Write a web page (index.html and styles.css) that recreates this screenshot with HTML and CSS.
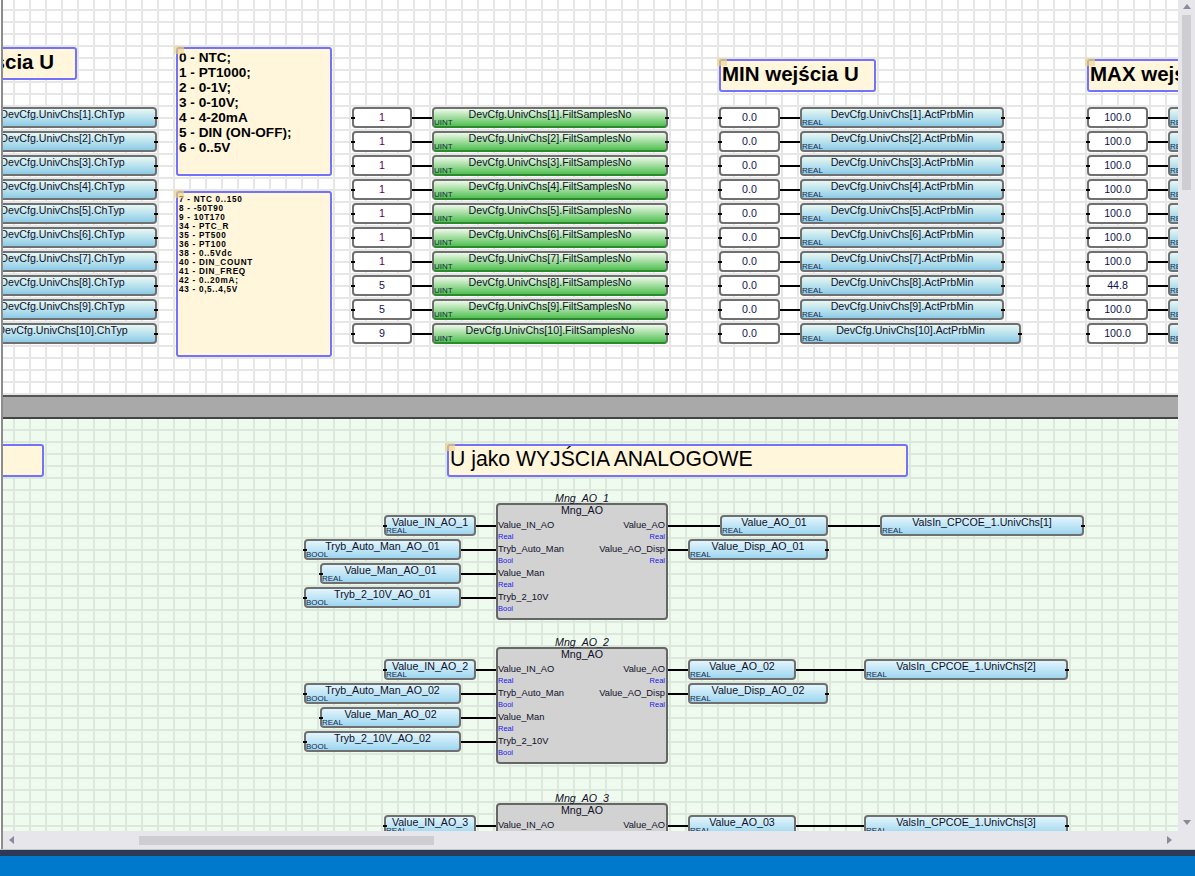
FILE: index.html
```html
<!DOCTYPE html>
<html lang="en">
<head>
    <meta charset="UTF-8">
    <meta name="viewport" content="width=device-width, initial-scale=1.0">
    <title>Mng_AO</title>
    <link rel="stylesheet" href="styles.css">
</head>
<body>
    <div class="frame">
        <div class="strip"></div>
        <div class="view">
            <div class="view-top">
                <div class="canvas">
                    <!-- sheet: universal channels config -->
                    <div class="sheet sheet-white">
                        <div class="note note-title note-type"><span>TYP wejścia U</span></div>
                        <div class="note note-legend">0 - NTC;
1 - PT1000;
2 - 0-1V;
3 - 0-10V;
4 - 4-20mA
5 - DIN (ON-OFF);
6 - 0..5V</div>
                        <div class="note note-legend-small">7 - NTC 0..150
8 - -50T90
9 - 10T170
34 - PTC_R
35 - PT500
36 - PT100
38 - 0..5Vdc
40 - DIN_COUNT
41 - DIN_FREQ
42 - 0..20mA;
43 - 0,5..4,5V</div>
                        <div class="note note-title note-min"><span>MIN wejścia U</span></div>
                        <div class="note note-title note-max"><span>MAX wejścia U</span></div>

                        <div class="group col-type">
                            <div class="row"><div class="var pin-r w-type">DevCfg.UnivChs[1].ChTyp</div></div>
                            <div class="row"><div class="var pin-r w-type">DevCfg.UnivChs[2].ChTyp</div></div>
                            <div class="row"><div class="var pin-r w-type">DevCfg.UnivChs[3].ChTyp</div></div>
                            <div class="row"><div class="var pin-r w-type">DevCfg.UnivChs[4].ChTyp</div></div>
                            <div class="row"><div class="var pin-r w-type">DevCfg.UnivChs[5].ChTyp</div></div>
                            <div class="row"><div class="var pin-r w-type">DevCfg.UnivChs[6].ChTyp</div></div>
                            <div class="row"><div class="var pin-r w-type">DevCfg.UnivChs[7].ChTyp</div></div>
                            <div class="row"><div class="var pin-r w-type">DevCfg.UnivChs[8].ChTyp</div></div>
                            <div class="row"><div class="var pin-r w-type">DevCfg.UnivChs[9].ChTyp</div></div>
                            <div class="row"><div class="var pin-r w-type">DevCfg.UnivChs[10].ChTyp</div></div>
                        </div>

                        <div class="group col-samples">
                            <div class="row"><div class="val pin-l changed">1</div><div class="wire w20"></div><div class="var green pin-r w-samples">DevCfg.UnivChs[1].FiltSamplesNo<span class="type">UINT</span></div></div>
                            <div class="row"><div class="val pin-l changed">1</div><div class="wire w20"></div><div class="var green pin-r w-samples">DevCfg.UnivChs[2].FiltSamplesNo<span class="type">UINT</span></div></div>
                            <div class="row"><div class="val pin-l changed">1</div><div class="wire w20"></div><div class="var green pin-r w-samples">DevCfg.UnivChs[3].FiltSamplesNo<span class="type">UINT</span></div></div>
                            <div class="row"><div class="val pin-l changed">1</div><div class="wire w20"></div><div class="var green pin-r w-samples">DevCfg.UnivChs[4].FiltSamplesNo<span class="type">UINT</span></div></div>
                            <div class="row"><div class="val pin-l changed">1</div><div class="wire w20"></div><div class="var green pin-r w-samples">DevCfg.UnivChs[5].FiltSamplesNo<span class="type">UINT</span></div></div>
                            <div class="row"><div class="val pin-l changed">1</div><div class="wire w20"></div><div class="var green pin-r w-samples">DevCfg.UnivChs[6].FiltSamplesNo<span class="type">UINT</span></div></div>
                            <div class="row"><div class="val pin-l changed">1</div><div class="wire w20"></div><div class="var green pin-r w-samples">DevCfg.UnivChs[7].FiltSamplesNo<span class="type">UINT</span></div></div>
                            <div class="row"><div class="val pin-l">5</div><div class="wire w20"></div><div class="var green pin-r w-samples">DevCfg.UnivChs[8].FiltSamplesNo<span class="type">UINT</span></div></div>
                            <div class="row"><div class="val pin-l">5</div><div class="wire w20"></div><div class="var green pin-r w-samples">DevCfg.UnivChs[9].FiltSamplesNo<span class="type">UINT</span></div></div>
                            <div class="row"><div class="val pin-l">9</div><div class="wire w20"></div><div class="var green pin-r w-samples">DevCfg.UnivChs[10].FiltSamplesNo<span class="type">UINT</span></div></div>
                        </div>

                        <div class="group col-min">
                            <div class="row"><div class="val pin-l">0.0</div><div class="wire w20"></div><div class="var pin-r w-lim">DevCfg.UnivChs[1].ActPrbMin<span class="type">REAL</span></div></div>
                            <div class="row"><div class="val pin-l">0.0</div><div class="wire w20"></div><div class="var pin-r w-lim">DevCfg.UnivChs[2].ActPrbMin<span class="type">REAL</span></div></div>
                            <div class="row"><div class="val pin-l">0.0</div><div class="wire w20"></div><div class="var pin-r w-lim">DevCfg.UnivChs[3].ActPrbMin<span class="type">REAL</span></div></div>
                            <div class="row"><div class="val pin-l">0.0</div><div class="wire w20"></div><div class="var pin-r w-lim">DevCfg.UnivChs[4].ActPrbMin<span class="type">REAL</span></div></div>
                            <div class="row"><div class="val pin-l">0.0</div><div class="wire w20"></div><div class="var pin-r w-lim">DevCfg.UnivChs[5].ActPrbMin<span class="type">REAL</span></div></div>
                            <div class="row"><div class="val pin-l">0.0</div><div class="wire w20"></div><div class="var pin-r w-lim">DevCfg.UnivChs[6].ActPrbMin<span class="type">REAL</span></div></div>
                            <div class="row"><div class="val pin-l">0.0</div><div class="wire w20"></div><div class="var pin-r w-lim">DevCfg.UnivChs[7].ActPrbMin<span class="type">REAL</span></div></div>
                            <div class="row"><div class="val pin-l">0.0</div><div class="wire w20"></div><div class="var pin-r w-lim">DevCfg.UnivChs[8].ActPrbMin<span class="type">REAL</span></div></div>
                            <div class="row"><div class="val pin-l">0.0</div><div class="wire w20"></div><div class="var pin-r w-lim">DevCfg.UnivChs[9].ActPrbMin<span class="type">REAL</span></div></div>
                            <div class="row"><div class="val pin-l">0.0</div><div class="wire w20"></div><div class="var pin-r w-lim-wide">DevCfg.UnivChs[10].ActPrbMin<span class="type">REAL</span></div></div>
                        </div>

                        <div class="group col-max">
                            <div class="row"><div class="val pin-l">100.0</div><div class="wire w20"></div><div class="var pin-r w-lim">DevCfg.UnivChs[1].ActPrbMax<span class="type">REAL</span></div></div>
                            <div class="row"><div class="val pin-l">100.0</div><div class="wire w20"></div><div class="var pin-r w-lim">DevCfg.UnivChs[2].ActPrbMax<span class="type">REAL</span></div></div>
                            <div class="row"><div class="val pin-l">100.0</div><div class="wire w20"></div><div class="var pin-r w-lim">DevCfg.UnivChs[3].ActPrbMax<span class="type">REAL</span></div></div>
                            <div class="row"><div class="val pin-l">100.0</div><div class="wire w20"></div><div class="var pin-r w-lim">DevCfg.UnivChs[4].ActPrbMax<span class="type">REAL</span></div></div>
                            <div class="row"><div class="val pin-l">100.0</div><div class="wire w20"></div><div class="var pin-r w-lim">DevCfg.UnivChs[5].ActPrbMax<span class="type">REAL</span></div></div>
                            <div class="row"><div class="val pin-l">100.0</div><div class="wire w20"></div><div class="var pin-r w-lim">DevCfg.UnivChs[6].ActPrbMax<span class="type">REAL</span></div></div>
                            <div class="row"><div class="val pin-l">100.0</div><div class="wire w20"></div><div class="var pin-r w-lim">DevCfg.UnivChs[7].ActPrbMax<span class="type">REAL</span></div></div>
                            <div class="row"><div class="val pin-l">44.8</div><div class="wire w20"></div><div class="var pin-r w-lim">DevCfg.UnivChs[8].ActPrbMax<span class="type">REAL</span></div></div>
                            <div class="row"><div class="val pin-l">100.0</div><div class="wire w20"></div><div class="var pin-r w-lim">DevCfg.UnivChs[9].ActPrbMax<span class="type">REAL</span></div></div>
                            <div class="row"><div class="val pin-l">100.0</div><div class="wire w20"></div><div class="var pin-r w-lim">DevCfg.UnivChs[10].ActPrbMax<span class="type">REAL</span></div></div>
                        </div>
                    </div>

                    <div class="band"></div>

                    <!-- sheet: analog outputs -->
                    <div class="sheet sheet-green">
                        <div class="note note-title note-left"></div>
                        <div class="note note-title note-ao"><span>U jako WYJŚCIA ANALOGOWE</span></div>

                        <div class="unit unit-1">
                            <div class="inputs">
                                <div class="row"><div class="var light pin-l w-in">Value_IN_AO_1<span class="type">REAL</span></div><div class="wire in-near"></div></div>
                                <div class="row"><div class="var light pin-l w-mode">Tryb_Auto_Man_AO_01<span class="type">BOOL</span></div><div class="wire in-far"></div></div>
                                <div class="row"><div class="var light pin-l w-man">Value_Man_AO_01<span class="type">REAL</span></div><div class="wire in-far"></div></div>
                                <div class="row"><div class="var light pin-l w-mode">Tryb_2_10V_AO_01<span class="type">BOOL</span></div><div class="wire in-far"></div></div>
                            </div>
                            <div class="fb">
                                <div class="fb-name">Mng_AO_1</div>
                                <div class="fb-title">Mng_AO</div>
                                <div class="fb-pins">
                                    <div class="fb-col">
                                        <div class="pin">Value_IN_AO<small>Real</small></div>
                                        <div class="pin">Tryb_Auto_Man<small>Bool</small></div>
                                        <div class="pin">Value_Man<small>Real</small></div>
                                        <div class="pin">Tryb_2_10V<small>Bool</small></div>
                                    </div>
                                    <div class="fb-col fb-col-out">
                                        <div class="pin">Value_AO<small>Real</small></div>
                                        <div class="pin">Value_AO_Disp<small>Real</small></div>
                                    </div>
                                </div>
                            </div>
                            <div class="outputs">
                                <div class="row"><div class="wire w52"></div><div class="var light w-out">Value_AO_01<span class="type">REAL</span></div><div class="wire w52"></div><div class="var light pin-r w-chs">ValsIn_CPCOE_1.UnivChs[1]<span class="type">REAL</span></div></div>
                                <div class="row"><div class="wire w20"></div><div class="var light pin-r w-disp">Value_Disp_AO_01<span class="type">REAL</span></div></div>
                            </div>
                        </div>

                        <div class="unit unit-2">
                            <div class="inputs">
                                <div class="row"><div class="var light pin-l w-in">Value_IN_AO_2<span class="type">REAL</span></div><div class="wire in-near"></div></div>
                                <div class="row"><div class="var light pin-l w-mode">Tryb_Auto_Man_AO_02<span class="type">BOOL</span></div><div class="wire in-far"></div></div>
                                <div class="row"><div class="var light pin-l w-man">Value_Man_AO_02<span class="type">REAL</span></div><div class="wire in-far"></div></div>
                                <div class="row"><div class="var light pin-l w-mode">Tryb_2_10V_AO_02<span class="type">BOOL</span></div><div class="wire in-far"></div></div>
                            </div>
                            <div class="fb">
                                <div class="fb-name">Mng_AO_2</div>
                                <div class="fb-title">Mng_AO</div>
                                <div class="fb-pins">
                                    <div class="fb-col">
                                        <div class="pin">Value_IN_AO<small>Real</small></div>
                                        <div class="pin">Tryb_Auto_Man<small>Bool</small></div>
                                        <div class="pin">Value_Man<small>Real</small></div>
                                        <div class="pin">Tryb_2_10V<small>Bool</small></div>
                                    </div>
                                    <div class="fb-col fb-col-out">
                                        <div class="pin">Value_AO<small>Real</small></div>
                                        <div class="pin">Value_AO_Disp<small>Real</small></div>
                                    </div>
                                </div>
                            </div>
                            <div class="outputs">
                                <div class="row"><div class="wire w20"></div><div class="var light w-out">Value_AO_02<span class="type">REAL</span></div><div class="wire w68"></div><div class="var light pin-r w-chs">ValsIn_CPCOE_1.UnivChs[2]<span class="type">REAL</span></div></div>
                                <div class="row"><div class="wire w20"></div><div class="var light pin-r w-disp">Value_Disp_AO_02<span class="type">REAL</span></div></div>
                            </div>
                        </div>

                        <div class="unit unit-3">
                            <div class="inputs">
                                <div class="row"><div class="var light pin-l w-in">Value_IN_AO_3<span class="type">REAL</span></div><div class="wire in-near"></div></div>
                            </div>
                            <div class="fb">
                                <div class="fb-name">Mng_AO_3</div>
                                <div class="fb-title">Mng_AO</div>
                                <div class="fb-pins">
                                    <div class="fb-col">
                                        <div class="pin">Value_IN_AO<small>Real</small></div>
                                    </div>
                                    <div class="fb-col fb-col-out">
                                        <div class="pin">Value_AO<small>Real</small></div>
                                    </div>
                                </div>
                            </div>
                            <div class="outputs">
                                <div class="row"><div class="wire w20"></div><div class="var light w-out">Value_AO_03<span class="type">REAL</span></div><div class="wire w68"></div><div class="var light pin-r w-chs">ValsIn_CPCOE_1.UnivChs[3]<span class="type">REAL</span></div></div>
                            </div>
                        </div>
                    </div>
                </div>
                <div class="vscroll">
                    <div class="arrow arrow-up"></div>
                    <div class="vthumb"></div>
                    <div class="arrow arrow-down"></div>
                </div>
            </div>
            <div class="hscroll">
                <div class="arrow arrow-left"></div>
                <div class="hthumb"></div>
                <div class="arrow arrow-right"></div>
            </div>
        </div>
    </div>
    <div class="navy-bar"></div>
    <div class="blue-bar"></div>
</body>
</html>
```

FILE: styles.css
```css
body {
    margin: 0;
    height: 876px;
    overflow: hidden;
    background: #fff;
    font-family: "Liberation Sans", Arial, sans-serif;
    color: #101028;
}

/* window */
.frame {
    display: flex;
    height: 849px;
    border-bottom: 1px solid #c4c4c4;
}
.strip {
    width: 1px;
    border-right: 2px solid #8c8c8c;
    background: #fff;
}
.view {
    flex: 1;
    min-width: 0;
    display: flex;
    flex-direction: column;
}
.view-top {
    display: flex;
    height: 831px;
}
.canvas {
    flex: 1;
    min-width: 0;
    overflow: hidden;
}
.navy-bar {
    height: 6px;
    background: #2c3a57;
}
.blue-bar {
    height: 20px;
    background: #0078cc;
}

/* scrollbars */
.vscroll {
    width: 17px;
    background: #e7e6eb;
    display: flex;
    flex-direction: column;
    align-items: center;
    padding: 4px 0 6px;
    box-sizing: border-box;
}
.vthumb {
    width: 9px;
    height: 175px;
    margin-top: 6px;
    background: #cdcdd2;
}
.hscroll {
    height: 18px;
    background: #e7e6eb;
    display: flex;
    align-items: center;
    padding: 0 23px 0 6px;
}
.hthumb {
    width: 295px;
    height: 9px;
    margin-left: 125px;
    background: #cdcdd2;
}
.arrow {
    width: 0;
    height: 0;
}
.arrow-up {
    border-left: 4.5px solid transparent;
    border-right: 4.5px solid transparent;
    border-bottom: 5px solid #8a8a9a;
}
.arrow-down {
    margin-top: auto;
    border-left: 4.5px solid transparent;
    border-right: 4.5px solid transparent;
    border-top: 5px solid #8a8a9a;
}
.arrow-left {
    border-top: 4.5px solid transparent;
    border-bottom: 4.5px solid transparent;
    border-right: 5px solid #8a8a9a;
}
.arrow-right {
    margin-left: auto;
    border-top: 4.5px solid transparent;
    border-bottom: 4.5px solid transparent;
    border-left: 5px solid #8a8a9a;
}

/* sheets with the 16x12 grid */
.sheet {
    position: relative;
    overflow: hidden;
    background-size: 16px 12px;
    background-position: 10px 9px;
}
.sheet-white {
    height: 395px;
    background-color: #fff;
    background-image:
        linear-gradient(to right, #e6e6e6 2px, transparent 2px),
        linear-gradient(to bottom, #e6e6e6 2px, transparent 2px);
}
.sheet-green {
    height: 412px;
    background-color: #f0fbf0;
    background-position: 10px 10px;
    background-image:
        linear-gradient(to right, #dde8dd 2px, transparent 2px),
        linear-gradient(to bottom, #dde8dd 2px, transparent 2px);
}
.band {
    height: 20px;
    background: #a9a9a9;
    border-top: 2px solid #555;
    border-bottom: 2px solid #444;
}

/* comment boxes */
.note {
    position: absolute;
    box-sizing: border-box;
    border: 2px solid #7272fa;
    border-radius: 3px;
    background: #fff6dc;
    color: #000;
}
.note::before {
    content: "";
    position: absolute;
    top: -3px;
    left: -4px;
    width: 10px;
    height: 8px;
    background: rgba(240, 210, 130, 0.65);
}
.note-title {
    display: flex;
    align-items: center;
    height: 33px;
    padding: 0 0 3px 1px;
    font-size: 20.5px;
    font-weight: bold;
    white-space: nowrap;
}
.note-type {
    left: -102px;
    top: 47px;
    width: 176px;
    justify-content: flex-end;
    padding-right: 21px;
}
.note-min {
    left: 716px;
    top: 59px;
    width: 157px;
}
.note-max {
    left: 1084px;
    top: 59px;
    width: 157px;
}
.note-left {
    left: -100px;
    top: 25px;
    width: 141px;
}
.note-ao {
    left: 444px;
    top: 25px;
    width: 461px;
    font-size: 21.2px;
    font-weight: normal;
}
.note-legend {
    left: 173px;
    top: 47px;
    width: 156px;
    height: 129px;
    padding: 1px 0 0 1px;
    font-size: 13.6px;
    font-weight: bold;
    line-height: 15px;
    white-space: pre;
}
.note-legend-small {
    left: 173px;
    top: 191px;
    width: 156px;
    height: 166px;
    padding: 2px 0 0 1px;
    font-size: 8.2px;
    font-weight: bold;
    letter-spacing: 0.7px;
    line-height: 9px;
    white-space: pre;
}

/* rows of variables */
.group {
    position: absolute;
    top: 107px;
}
.col-type { left: -35px; }
.col-samples { left: 349px; }
.col-min { left: 716px; }
.col-max { left: 1084px; }

.row {
    display: flex;
    height: 21px;
    margin-bottom: 3px;
}
.wire {
    height: 2px;
    margin-top: 10px;
    background: #000;
    flex: none;
}
.w20 { width: 20px; }
.w52 { width: 52px; }
.w68 { width: 68px; }
.in-near { width: 22px; margin-right: -2px; }
.in-far { width: 37px; margin-right: -2px; }

.val, .var {
    position: relative;
    flex: none;
    box-sizing: border-box;
    height: 21px;
    border: 2px solid #707070;
    border-radius: 4px;
    font-size: 10.67px;
    text-align: center;
    white-space: nowrap;
}
.val {
    width: 61px;
    background: #fff;
    line-height: 17px;
    color: #101050;
}
.col-samples .val {
    width: 60px;
}
.val.changed {
    color: #600060;
}
.var {
    line-height: 11px;
    background: linear-gradient(to bottom, #e6f7f4, #8ecce6);
}
.var.green {
    background: linear-gradient(to bottom, #eef9ea, #52c052);
    border-bottom-color: #2b8a2b;
}
.var.light {
    background: linear-gradient(to bottom, #e2f5fc, #9ed6ef);
}
.pin-l::before,
.pin-r::after {
    content: "";
    position: absolute;
    top: 8px;
    width: 4px;
    height: 2px;
    background: #000;
}
.pin-l::before { left: -3px; }
.pin-r::after { right: -3px; }

.type {
    position: absolute;
    left: 0;
    bottom: -1px;
    font-size: 8px;
    line-height: 9px;
    color: #182848;
}

.w-type { width: 189px; }
.w-samples { width: 236px; }
.w-lim { width: 204px; }
.w-lim-wide { width: 221px; }
.w-in { width: 92px; }
.w-mode { width: 157px; }
.w-man { width: 141px; }
.w-out { width: 108px; }
.w-disp { width: 140px; }
.w-chs { width: 204px; }

/* function blocks */
.unit {
    position: absolute;
    left: 301px;
    display: flex;
    align-items: flex-start;
}
.unit-1 { top: 84px; }
.unit-2 { top: 228px; }
.unit-3 { top: 384px; }
.inputs {
    width: 192px;
    padding-top: 12px;
}
.inputs .row {
    justify-content: flex-end;
}
.outputs {
    padding-top: 12px;
}
.fb {
    position: relative;
    box-sizing: border-box;
    width: 172px;
    height: 117px;
    background: #d2d2d2;
    border: 2px solid #666;
    border-radius: 4px;
    font-size: 9.33px;
}
.fb-name {
    position: absolute;
    left: 0;
    right: 0;
    top: -13px;
    font-size: 10.67px;
    font-style: italic;
    line-height: 12px;
    text-align: center;
}
.fb-title {
    font-size: 10.67px;
    line-height: 11px;
    text-align: center;
    margin-bottom: 3px;
}
.fb-pins {
    display: flex;
    justify-content: space-between;
    padding: 0 1px 0 0;
}
.fb-col-out {
    text-align: right;
}
.pin {
    height: 24px;
    line-height: 12px;
    white-space: nowrap;
}
.pin small {
    display: block;
    font-size: 7.5px;
    line-height: 11px;
    color: #1a1aee;
}
```
